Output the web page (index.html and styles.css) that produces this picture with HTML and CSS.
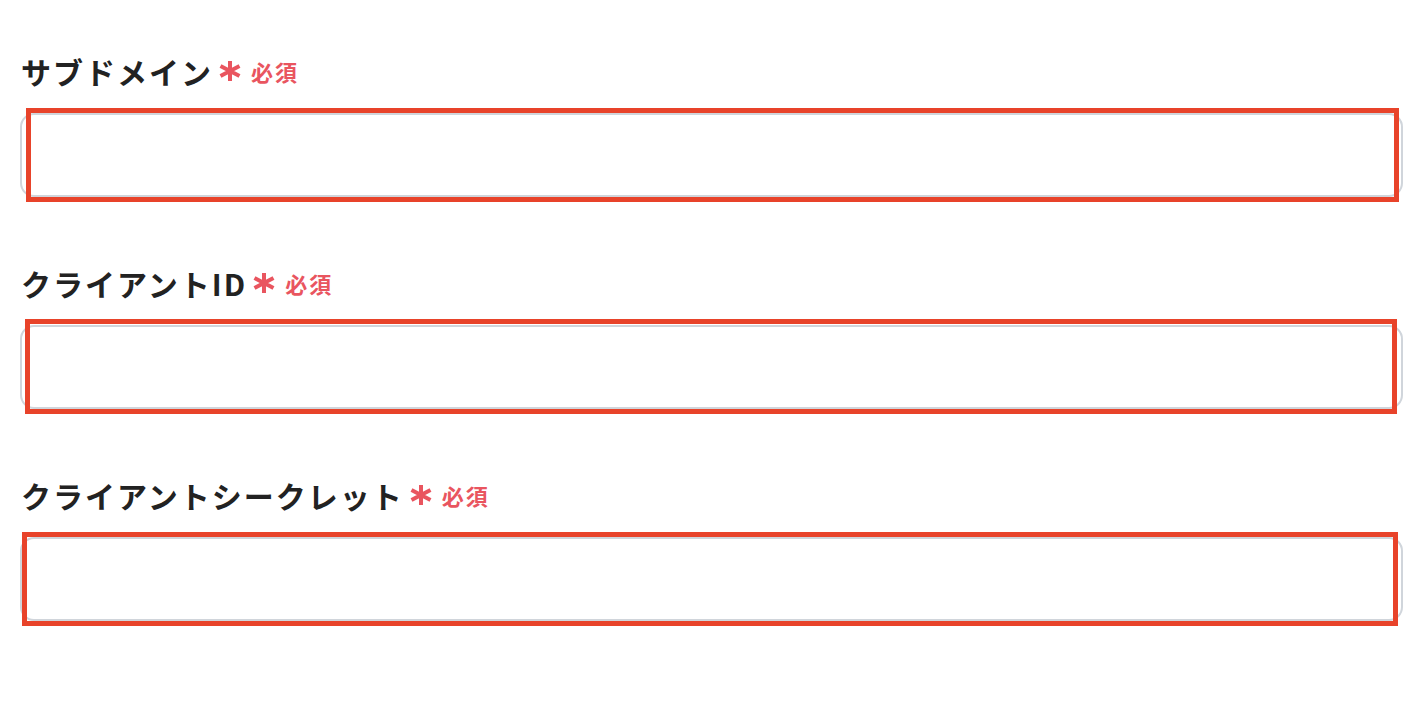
FILE: index.html
```html
<!DOCTYPE html>
<html lang="ja">
<head>
    <meta charset="UTF-8">
    <meta name="viewport" content="width=device-width, initial-scale=1.0">
    <title>認証情報</title>

    <link rel="stylesheet" href="styles.css">
</head>
<body>
    <div class="form">
        <div class="field">
            <label class="label" for="sub">サブドメイン<span class="req"><svg class="star" viewBox="0 0 22 20"><path d="M11 0v20M1.5 5l19 10M20.5 5l-19 10"/></svg>必須</span></label>
            <div class="box">
                <input class="input" id="sub" type="text" autocomplete="off">
                <div class="mark m1"></div>
            </div>
        </div>

        <div class="field">
            <label class="label" for="cid">クライアントID<span class="req"><svg class="star" viewBox="0 0 22 20"><path d="M11 0v20M1.5 5l19 10M20.5 5l-19 10"/></svg>必須</span></label>
            <div class="box">
                <input class="input" id="cid" type="text" autocomplete="off">
                <div class="mark m2"></div>
            </div>
        </div>

        <div class="field">
            <label class="label" for="secret">クライアントシークレット<span class="req"><svg class="star" viewBox="0 0 22 20"><path d="M11 0v20M1.5 5l19 10M20.5 5l-19 10"/></svg>必須</span></label>
            <div class="box">
                <input class="input" id="secret" type="text" autocomplete="off">
                <div class="mark m3"></div>
            </div>
        </div>
    </div>
</body>
</html>
```

FILE: styles.css
```css
* {
    margin: 0;
    padding: 0;
    box-sizing: border-box;
}

body {
    background: #fff;
    font-family: "Noto Sans CJK JP", "Noto Sans", sans-serif;
    color: #222;
}

.form {
    display: grid;
    gap: 66px;
    padding: 51px 25px 60px 20px;
}

.field {
    display: grid;
    gap: 22px;
}

.label {
    display: flex;
    align-items: center;
    height: 40px;
    padding-left: 1px;
    font-size: 30px;
    font-weight: 700;
    letter-spacing: 2px;
}

.req {
    display: flex;
    align-items: center;
    gap: 10px;
    margin-left: 6px;
    color: #e9555f;
    font-size: 22px;
    letter-spacing: 2px;
}

.star {
    width: 22px;
    height: 20px;
    stroke: #e9555f;
    stroke-width: 4;
    fill: none;
}

.box {
    position: relative;
}

.input {
    display: block;
    width: 100%;
    height: 84px;
    border: 2px solid #d0d5db;
    border-radius: 14px;
    background: #fff;
    outline: none;
}

/* red highlight frames drawn over the inputs */
.mark {
    position: absolute;
    border: 5px solid #e8432a;
    pointer-events: none;
}

.m1 { left: 6px; right: 4px; top: -5px; bottom: -5px; }
.m2 { left: 5px; right: 6px; top: -6px; bottom: -5px; }
.m3 { left: 2px; right: 5px; top: -5px; bottom: -5px; }
```
